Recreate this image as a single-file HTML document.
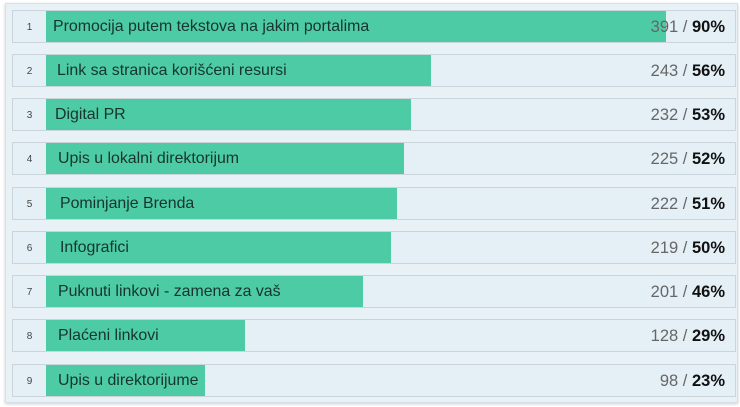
<!DOCTYPE html>
<html><head><style>
body{margin:0;width:740px;height:407px;background:#fff;font-family:"Liberation Sans",sans-serif;overflow:hidden}
.wrap{position:absolute;left:5px;top:3px;width:731px;height:398px;background:#e8f1f6;border:1px solid #d6e0e6;box-shadow:0 1px 3px rgba(0,0,0,.2)}
.row{position:absolute;left:12px;width:722px;height:31px;background:#e4f0f6;border:1px solid #c9d5db}
.num{position:absolute;left:0;top:1px;width:33px;height:31px;line-height:31px;text-align:center;font-size:10px;color:#444}
.bar{position:absolute;left:33px;top:0;height:31px;background:#4ccba5;overflow:hidden;white-space:nowrap;font-size:15.9px;line-height:32px;color:#17352b}
.val{position:absolute;right:10px;top:0;line-height:32px;font-size:16.5px;color:#666}
.val b{color:#111}
</style></head><body>
<div class="wrap"></div>
<div class="row" style="top:10px"><div class="num">1</div><div class="bar" style="width:620px;padding-left:7px;box-sizing:border-box">Promocija putem tekstova na jakim portalima</div><div class="val">391 / <b>90%</b></div></div>
<div class="row" style="top:54px"><div class="num">2</div><div class="bar" style="width:385px;padding-left:11px;box-sizing:border-box">Link sa stranica korišćeni resursi</div><div class="val">243 / <b>56%</b></div></div>
<div class="row" style="top:98px"><div class="num">3</div><div class="bar" style="width:365px;padding-left:9px;box-sizing:border-box">Digital PR</div><div class="val">232 / <b>53%</b></div></div>
<div class="row" style="top:142px"><div class="num">4</div><div class="bar" style="width:358px;padding-left:12px;box-sizing:border-box">Upis u lokalni direktorijum</div><div class="val">225 / <b>52%</b></div></div>
<div class="row" style="top:187px"><div class="num">5</div><div class="bar" style="width:351px;padding-left:14px;box-sizing:border-box">Pominjanje Brenda</div><div class="val">222 / <b>51%</b></div></div>
<div class="row" style="top:231px"><div class="num">6</div><div class="bar" style="width:345px;padding-left:14px;box-sizing:border-box">Infografici</div><div class="val">219 / <b>50%</b></div></div>
<div class="row" style="top:275px"><div class="num">7</div><div class="bar" style="width:317px;padding-left:12px;box-sizing:border-box">Puknuti linkovi - zamena za vaš</div><div class="val">201 / <b>46%</b></div></div>
<div class="row" style="top:319px"><div class="num">8</div><div class="bar" style="width:199px;padding-left:12px;box-sizing:border-box">Plaćeni linkovi</div><div class="val">128 / <b>29%</b></div></div>
<div class="row" style="top:364px"><div class="num">9</div><div class="bar" style="width:159px;padding-left:12px;box-sizing:border-box">Upis u direktorijume</div><div class="val">98 / <b>23%</b></div></div>
</body></html>
